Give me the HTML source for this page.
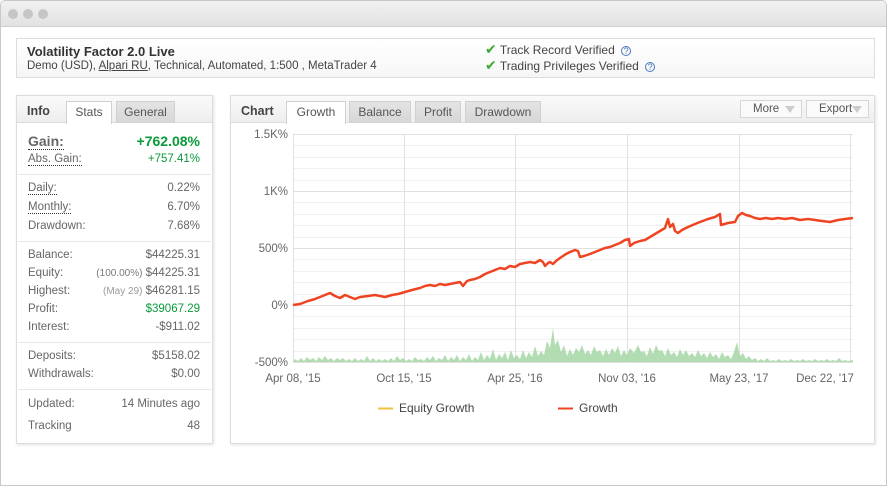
<!DOCTYPE html>
<html><head><meta charset="utf-8"><style>
*{box-sizing:border-box;margin:0;padding:0}
body{width:889px;height:487px;background:#fff;font-family:"Liberation Sans","DejaVu Sans",sans-serif;position:relative;overflow:hidden;color:#333}
.win{position:absolute;left:0;top:0;width:887px;height:486px;border:1px solid #c8c8c8;border-radius:5px 5px 0 0;background:#fff}
.tb{position:absolute;left:0;top:0;width:885px;height:26px;background:linear-gradient(#f1f1f1,#e2e2e2);border-bottom:1px solid #cfcfcf;border-radius:5px 5px 0 0}
.dot{position:absolute;top:8px;width:10px;height:10px;border-radius:50%;background:#c6c6c6}
.hdr{position:absolute;left:16px;top:38px;width:859px;height:40px;border:1px solid #ddd;background:linear-gradient(#fff,#f6f6f6)}
.abs{position:absolute;white-space:nowrap}
.panel{position:absolute;border:1px solid #ddd;background:#fff;box-shadow:1px 1px 3px rgba(0,0,0,.12)}
.ph{position:absolute;left:0;top:0;right:0;height:27px;background:linear-gradient(#fafafa,#eee);border-bottom:1px solid #ddd}
.tab{position:absolute;top:5px;height:22px;font-size:12px;color:#555;text-align:center;line-height:21px;background:linear-gradient(#e4e4e4,#d6d6d6);border:1px solid #d0d0d0;border-bottom:none}
.tab.on{background:#fff;height:23px}
.row{position:absolute;left:11px;width:172px;font-size:11.5px;color:#666;height:16px}
.row .r{position:absolute;right:0;top:0}
.u{border-bottom:1px dotted #333}
.g{color:#0a9a3a}
.sep{position:absolute;left:1px;width:193px;height:1px;background:#e8e8e8}
.btn{position:absolute;top:4px;height:18px;border:1px solid #d6d6d6;background:#fafafa;font-size:11.5px;color:#555;line-height:16px;padding-left:12px}
.btn i{position:absolute;right:6px;top:5px;border-left:5px solid transparent;border-right:5px solid transparent;border-top:7px solid #ccc}
.ax{font-size:11.5px;fill:#666;font-family:"Liberation Sans",sans-serif}
.ck{color:#3aaa35;font-weight:bold;font-size:14px}
.q{color:#4a7ac0;font-size:9px;border:1px solid #4a7ac0;border-radius:50%;display:inline-block;width:10px;height:10px;line-height:9px;text-align:center;margin-left:3px}
</style></head><body>
<div class="win">
<div class="tb"><div class="dot" style="left:7px"></div><div class="dot" style="left:22px"></div><div class="dot" style="left:37px"></div></div>
</div>
<div class="hdr">
<div class="abs" style="left:10px;top:5px;font-size:13px;font-weight:bold;color:#333">Volatility Factor 2.0 Live</div>
<div class="abs" style="left:10px;top:21px;font-size:11.5px;color:#444">Demo (USD), <span style="text-decoration:underline">Alpari RU</span>, Technical, Automated, 1:500 , MetaTrader 4</div>
<div class="abs" style="left:468px;top:2px;font-size:12px;color:#444"><span class="ck">✔</span> Track Record Verified <span class="q">?</span></div>
<div class="abs" style="left:468px;top:18px;font-size:12px;color:#444"><span class="ck">✔</span> Trading Privileges Verified <span class="q">?</span></div>
</div>

<div class="panel" style="left:16px;top:95px;width:197px;height:349px">
<div class="ph"></div>
<div class="abs" style="left:10px;top:8px;font-size:12.5px;font-weight:bold;color:#444">Info</div>
<div class="tab on" style="left:49px;width:46px">Stats</div>
<div class="tab" style="left:99px;width:59px">General</div>
<div class="row" style="top:37px;font-size:14px;height:20px"><span class="u" style="font-weight:bold;color:#666">Gain:</span><span class="r g" style="font-weight:bold">+762.08%</span></div>
<div class="row" style="top:57px"><span class="u">Abs. Gain:</span><span class="r g">+757.41%</span></div>
<div class="sep" style="top:78px"></div>
<div class="row" style="top:86px"><span class="u">Daily:</span><span class="r">0.22%</span></div>
<div class="row" style="top:105px"><span class="u">Monthly:</span><span class="r">6.70%</span></div>
<div class="row" style="top:124px">Drawdown:<span class="r">7.68%</span></div>
<div class="sep" style="top:145px"></div>
<div class="row" style="top:153px">Balance:<span class="r">$44225.31</span></div>
<div class="row" style="top:171px">Equity:<span class="r"><span style="font-size:10px;color:#777">(100.00%)</span> $44225.31</span></div>
<div class="row" style="top:189px">Highest:<span class="r"><span style="font-size:10px;color:#999">(May 29)</span> $46281.15</span></div>
<div class="row" style="top:207px">Profit:<span class="r g">$39067.29</span></div>
<div class="row" style="top:225px">Interest:<span class="r">-$911.02</span></div>
<div class="sep" style="top:246px"></div>
<div class="row" style="top:254px">Deposits:<span class="r">$5158.02</span></div>
<div class="row" style="top:272px">Withdrawals:<span class="r">$0.00</span></div>
<div class="sep" style="top:293px"></div>
<div class="row" style="top:302px">Updated:<span class="r">14 Minutes ago</span></div>
<div class="row" style="top:324px">Tracking<span class="r">48</span></div>
</div>

<div class="panel" style="left:230px;top:95px;width:645px;height:349px">
<div class="ph"></div>
<div class="abs" style="left:10px;top:8px;font-size:12.5px;font-weight:bold;color:#444">Chart</div>
<div class="tab on" style="left:55px;width:60px">Growth</div>
<div class="tab" style="left:118px;width:62px">Balance</div>
<div class="tab" style="left:184px;width:46px">Profit</div>
<div class="tab" style="left:234px;width:76px">Drawdown</div>
<div class="btn" style="left:509px;width:62px">More<i></i></div>
<div class="btn" style="left:575px;width:63px">Export<i></i></div>
</div>

<svg style="position:absolute;left:0;top:0" width="889" height="487">
<g stroke="#f0f0f0" stroke-width="1">
<line x1="293" y1="145.5" x2="853" y2="145.5"/><line x1="293" y1="157.5" x2="853" y2="157.5"/><line x1="293" y1="168.5" x2="853" y2="168.5"/><line x1="293" y1="180.5" x2="853" y2="180.5"/>
<line x1="293" y1="202.5" x2="853" y2="202.5"/><line x1="293" y1="214.5" x2="853" y2="214.5"/><line x1="293" y1="225.5" x2="853" y2="225.5"/><line x1="293" y1="237.5" x2="853" y2="237.5"/>
<line x1="293" y1="259.5" x2="853" y2="259.5"/><line x1="293" y1="271.5" x2="853" y2="271.5"/><line x1="293" y1="282.5" x2="853" y2="282.5"/><line x1="293" y1="294.5" x2="853" y2="294.5"/>
<line x1="293" y1="316.5" x2="853" y2="316.5"/><line x1="293" y1="328.5" x2="853" y2="328.5"/><line x1="293" y1="339.5" x2="853" y2="339.5"/><line x1="293" y1="351.5" x2="853" y2="351.5"/>
</g>
<g stroke="#e0e0e0" stroke-width="1">
<line x1="293" y1="134.5" x2="853" y2="134.5"/><line x1="293" y1="191.5" x2="853" y2="191.5"/><line x1="293" y1="248.5" x2="853" y2="248.5"/><line x1="293" y1="305.5" x2="853" y2="305.5"/><line x1="293" y1="362.5" x2="853" y2="362.5"/>
<line x1="293.5" y1="134" x2="293.5" y2="362"/><line x1="404.5" y1="134" x2="404.5" y2="362"/><line x1="515.5" y1="134" x2="515.5" y2="362"/><line x1="627.5" y1="134" x2="627.5" y2="362"/><line x1="739.5" y1="134" x2="739.5" y2="362"/><line x1="850.5" y1="134" x2="850.5" y2="362"/>
</g>
<path fill="#9fd49f" opacity=".8" d="M293 362 L295 359 L298 361 L301 358 L304 361 L307 357 L310 360 L313 358 L316 361 L319 357 L322 360 L325 356 L328 360 L331 358 L334 361 L337 358 L340 360 L343 358 L346 361 L349 359 L352 361 L355 358 L358 361 L361 359 L364 361 L367 356 L370 361 L373 358 L376 361 L379 359 L382 361 L385 359 L388 361 L391 358 L394 361 L397 356 L400 360 L403 358 L406 361 L409 359 L412 361 L415 357 L418 360 L421 359 L424 361 L427 357 L430 360 L433 356 L436 361 L439 358 L442 360 L445 355 L448 361 L451 357 L454 360 L457 355 L460 361 L463 357 L466 360 L469 354 L472 361 L475 357 L478 360 L481 352 L484 360 L487 355 L490 359 L493 349 L496 360 L499 354 L502 358 L505 352 L508 360 L511 350 L514 358 L517 355 L520 359 L523 350 L526 358 L529 352 L532 357 L535 346 L538 356 L541 351 L544 355 L547 341 L550 348 L553 328 L555 345 L558 340 L561 352 L564 345 L567 356 L570 349 L573 355 L576 348 L579 352 L582 345 L585 354 L588 350 L591 355 L594 346 L597 352 L600 350 L603 356 L606 349 L609 355 L612 348 L615 353 L618 346 L621 356 L624 350 L627 355 L630 348 L634 353 L638 345 L641 352 L644 351 L647 356 L650 347 L653 354 L656 345 L659 351 L662 350 L665 356 L668 348 L671 355 L674 352 L677 357 L680 349 L683 355 L686 350 L689 356 L692 353 L695 357 L698 350 L701 356 L704 353 L707 358 L710 352 L713 357 L716 354 L719 359 L722 352 L725 357 L728 355 L731 359 L734 352 L737 342 L740 356 L743 353 L746 359 L749 356 L752 360 L755 358 L758 361 L761 359 L764 361 L767 358 L770 361 L773 360 L776 361 L779 359 L782 361 L785 360 L788 361 L791 359 L794 361 L797 360 L800 361 L803 359 L806 361 L809 360 L812 361 L815 359 L818 361 L821 360 L824 361 L827 359 L830 361 L833 360 L836 361 L839 358 L842 361 L845 360 L848 361 L853 360 L853 362 Z"/>
<polyline fill="none" stroke="#ee4422" stroke-width="2.5" stroke-linejoin="round" points="293,305 300,304 308,301 315,299 320,297 325,295 330,293 335,296 340,298 345,295 350,297 355,299 360,297 368,296 375,295 380,296 385,297 392,295 398,294 405,292 412,290 420,288 425,286 430,285 435,286 440,284 445,285 450,284 455,283 460,282 463,286 467,281 470,280 475,279 480,277 485,274 490,272 495,270 500,268 505,269 510,266 515,267 520,264 525,263 530,262 535,263 540,260 543,262 545,266 548,263 550,262 553,264 556,261 560,258 563,256 566,254 570,252 575,250 578,251 580,257 584,256 590,254 595,252 600,250 605,248 610,247 615,245 620,243 625,240 629,239 630,246 634,243 640,241 645,240 650,237 655,234 660,231 665,228 668,219 670,227 673,224 675,231 678,233 682,230 688,227 695,224 700,222 708,219 715,217 720,214 721,225 728,223 735,222 738,216 742,213 746,215 750,216 755,218 760,219 766,218 772,219 778,218 785,219 792,218 800,220 808,219 815,220 822,221 830,222 838,220 845,219 853,218"/>
<g class="ax" text-anchor="end">
<text x="288" y="138">1.5K%</text><text x="288" y="195">1K%</text><text x="288" y="252">500%</text><text x="288" y="309">0%</text><text x="288" y="366">-500%</text>
</g>
<g class="ax" text-anchor="middle">
<text x="293" y="382">Apr 08, '15</text><text x="404" y="382">Oct 15, '15</text><text x="515" y="382">Apr 25, '16</text><text x="627" y="382">Nov 03, '16</text><text x="739" y="382">May 23, '17</text><text x="825" y="382">Dec 22, '17</text>
</g>
<line x1="378" y1="408.5" x2="393" y2="408.5" stroke="#f0c040" stroke-width="2"/>
<text class="ax" x="399" y="412" style="font-size:12px;fill:#444">Equity Growth</text>
<line x1="558" y1="408.5" x2="573" y2="408.5" stroke="#ee4422" stroke-width="2"/>
<text class="ax" x="579" y="412" style="font-size:12px;fill:#444">Growth</text>
</svg>
</body></html>
